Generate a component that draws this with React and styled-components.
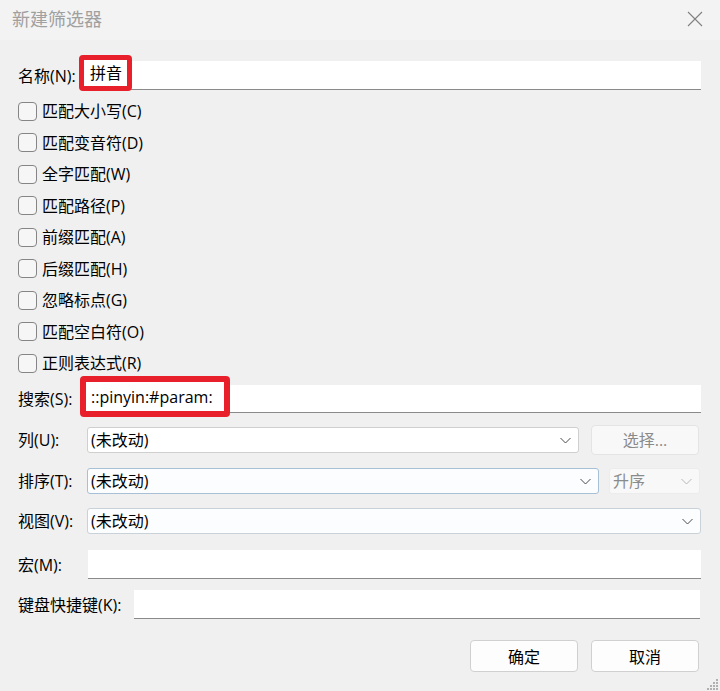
import React from "react";
import styled, { createGlobalStyle } from "styled-components";

const GlobalStyle = createGlobalStyle`
  html, body { margin: 0; padding: 0; background: #f0f0f0; }
  * { box-sizing: border-box; }
`;

const FONT = `"Open Sans", "Noto Sans CJK SC", sans-serif`;

const Window = styled.div`
  position: relative;
  width: 720px;
  height: 691px;
  background: #f0f0f0;
  font-family: ${FONT};
  font-size: 16px;
  line-height: 22px;
  color: #000;
  display: flex;
  flex-direction: column;
  overflow: hidden;
`;

const TitleBar = styled.div`
  height: 40px;
  flex: none;
  background: #f3f3f3;
  display: flex;
  align-items: center;
  justify-content: space-between;
  padding: 0 17px 2px 12px;
`;

const Title = styled.div`
  font-size: 18px;
  line-height: 22px;
  color: #a0a0a0;
`;

const CloseBtn = styled.div`
  width: 16px;
  height: 16px;
  display: flex;
  align-items: center;
  justify-content: center;
`;

const Body = styled.div`
  display: flex;
  flex-direction: column;
  padding: 0 19px 0 18px;
`;

const Row = styled.div`
  display: flex;
  align-items: center;
  height: ${(p) => p.$h}px;
  margin-top: ${(p) => p.$mt}px;
  padding-right: ${(p) => p.$pr || 0}px;
  justify-content: ${(p) => p.$justify || "flex-start"};
  gap: ${(p) => p.$gap || 0}px;
`;

const Label = styled.label`
  flex: none;
  width: ${(p) => p.$w}px;
  white-space: nowrap;
`;

const Field = styled.div`
  flex: 1;
  align-self: stretch;
  background: #fff;
  border-bottom: 1px solid #8a8a8a;
  display: flex;
  align-items: flex-start;
  margin-right: ${(p) => p.$mr || 0}px;
`;

const Highlight = styled.span`
  flex: none;
  width: ${(p) => p.$w}px;
  height: ${(p) => p.$h}px;
  margin-top: ${(p) => p.$mt}px;
  margin-left: ${(p) => p.$ml}px;
  border: ${(p) => p.$bw}px solid #e8202b;
  border-radius: 4px;
  background: #fff;
  display: flex;
  align-items: center;
  padding-left: ${(p) => p.$pl}px;
  white-space: nowrap;
`;

const CheckList = styled.div`
  display: flex;
  flex-direction: column;
  margin-top: 5.25px;
`;

const CheckRow = styled.label`
  height: 31.5px;
  display: flex;
  align-items: center;
  gap: 5px;
`;

const Box = styled.span`
  width: 19px;
  height: 19px;
  flex: none;
  border: 1px solid #858585;
  border-radius: 4px;
  background: #f6f6f6;
`;

const Combo = styled.div`
  flex: ${(p) => (p.$w ? "none" : "1")};
  width: ${(p) => (p.$w ? `${p.$w}px` : "auto")};
  height: 26px;
  border: 1px solid ${(p) => p.$border || "#cfcfcf"};
  border-radius: 3px;
  background: ${(p) => p.$bg || "#fff"};
  color: ${(p) => (p.$disabled ? "#8a8a8a" : "#000")};
  display: flex;
  align-items: center;
  justify-content: space-between;
  padding: 0 7px 0 3px;
  margin-right: ${(p) => p.$mr || 0}px;
`;

const GhostButton = styled.div`
  flex: none;
  width: 108px;
  height: 30px;
  border: 1px solid #e4e4e4;
  border-radius: 4px;
  background: #f8f8f8;
  color: #8a8a8a;
  display: flex;
  align-items: center;
  justify-content: center;
`;

const Button = styled.button`
  width: 108px;
  height: 32px;
  border: 1px solid #d0d0d0;
  border-radius: 4px;
  background: #fdfdfd;
  font-family: ${FONT};
  font-size: 16px;
  color: #000;
  padding: 0;
`;

const Grip = styled.svg`
  position: absolute;
  right: 2px;
  bottom: 1px;
`;

const Chevron = ({ light }) => (
  <svg width="11" height="7" viewBox="0 0 11 7">
    <polyline
      points="0.5,1 5.5,6 10.5,1"
      fill="none"
      stroke={light ? "#b8b8b8" : "#4a4a4a"}
      strokeWidth="1"
    />
  </svg>
);

const checks = [
  "匹配大小写(C)",
  "匹配变音符(D)",
  "全字匹配(W)",
  "匹配路径(P)",
  "前缀匹配(A)",
  "后缀匹配(H)",
  "忽略标点(G)",
  "匹配空白符(O)",
  "正则表达式(R)",
];

export default function App() {
  return (
    <>
      <GlobalStyle />
      <Window>
        <TitleBar>
          <Title>新建筛选器</Title>
          <CloseBtn>
            <svg width="16" height="16" viewBox="0 0 16 16">
              <path d="M1 1 L15 15 M15 1 L1 15" stroke="#808080" strokeWidth="1.1" />
            </svg>
          </CloseBtn>
        </TitleBar>
        <Body>
          <Row $h={29} $mt={21}>
            <Label $w={62}>名称(N):</Label>
            <Field>
              <Highlight $w={53} $h={36} $mt={-6} $ml={-1} $bw={5} $pl={6}>
                拼音
              </Highlight>
            </Field>
          </Row>

          <CheckList>
            {checks.map((c) => (
              <CheckRow key={c}>
                <Box />
                {c}
              </CheckRow>
            ))}
          </CheckList>

          <Row $h={28} $mt={6.25}>
            <Label $w={63}>搜索(S):</Label>
            <Field>
              <Highlight $w={150} $h={41} $mt={-9} $ml={-1} $bw={6} $pl={5}>
                ::pinyin:#param:
              </Highlight>
            </Field>
          </Row>

          <Row $h={30} $mt={12}>
            <Label $w={69}>列(U):</Label>
            <Combo $w={492} $mr={12}>
              <span>(未改动)</span>
              <Chevron />
            </Combo>
            <GhostButton>选择...</GhostButton>
          </Row>

          <Row $h={26} $mt={13}>
            <Label $w={69}>排序(T):</Label>
            <Combo $w={512} $mr={10} $border="#a8c0d6" $bg="#fbfdff">
              <span>(未改动)</span>
              <Chevron />
            </Combo>
            <Combo $w={91} $border="#ececec" $bg="#f8f8f8" $disabled>
              <span>升序</span>
              <Chevron light />
            </Combo>
          </Row>

          <Row $h={26} $mt={14}>
            <Label $w={69}>视图(V):</Label>
            <Combo $border="#c9d1d9" $bg="#fcfdfe">
              <span>(未改动)</span>
              <Chevron />
            </Combo>
          </Row>

          <Row $h={29} $mt={16}>
            <Label $w={70}>宏(M):</Label>
            <Field />
          </Row>

          <Row $h={29} $mt={11}>
            <Label $w={116}>键盘快捷键(K):</Label>
            <Field $mr={1} />
          </Row>

          <Row $h={32} $mt={21} $justify="flex-end" $gap={13} $pr={2}>
            <Button>确定</Button>
            <Button>取消</Button>
          </Row>
        </Body>
        <Grip width="12" height="12" viewBox="0 0 12 12">
          {[
            [10, 1],
            [7, 4],
            [10, 4],
            [4, 7],
            [7, 7],
            [10, 7],
            [1, 10],
            [4, 10],
            [7, 10],
            [10, 10],
          ].map(([x, y]) => (
            <rect key={`${x}-${y}`} x={x} y={y} width="2" height="2" fill="#b0b0b0" />
          ))}
        </Grip>
      </Window>
    </>
  );
}
